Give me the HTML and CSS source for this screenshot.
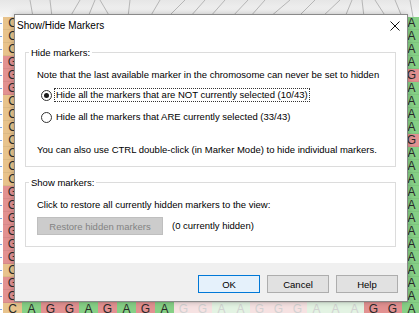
FILE: index.html
```html
<!DOCTYPE html>
<html lang="en">
<head>
  <meta charset="UTF-8" />
  <meta name="viewport" content="width=device-width, initial-scale=1.0"/>
  <title>Show/Hide Markers</title>
  <link rel="stylesheet" href="styles.css">
</head>
<body>
  <div class="view">
    <div class="map-header">
      <svg width="419" height="17" viewBox="0 0 419 17">
        <g stroke="#a8a8a8" stroke-width="0.8" fill="none">
          <line x1="30" y1="0" x2="33" y2="17"/>
          <line x1="50" y1="0" x2="52" y2="17"/>
          <line x1="80" y1="0" x2="70" y2="17"/>
          <line x1="95" y1="0" x2="88" y2="17"/>
          <line x1="100" y1="0" x2="110" y2="17"/>
          <line x1="130" y1="0" x2="128" y2="17"/>
          <line x1="160" y1="0" x2="150" y2="17"/>
          <line x1="185" y1="0" x2="168" y2="17"/>
          <line x1="205" y1="0" x2="190" y2="17"/>
          <line x1="225" y1="0" x2="210" y2="17"/>
          <line x1="248" y1="0" x2="232" y2="17"/>
          <line x1="265" y1="0" x2="250" y2="17"/>
          <line x1="290" y1="0" x2="270" y2="17"/>
          <line x1="315" y1="0" x2="298" y2="17"/>
          <line x1="340" y1="0" x2="322" y2="17"/>
          <line x1="352" y1="0" x2="345" y2="17"/>
          <line x1="362" y1="0" x2="364" y2="17"/>
          <line x1="375" y1="0" x2="386" y2="17"/>
          <line x1="395" y1="0" x2="402" y2="17"/>
          <line x1="410" y1="0" x2="413" y2="17"/>
        </g>
      </svg>
    </div>
    <div class="grid" id="grid"></div>
  </div>

  <div class="dialog">
    <div class="title-bar">
      <span class="title">Show/Hide Markers</span>
      <svg class="close" width="10" height="10" viewBox="0 0 10 10">
        <path d="M0.5 0.5 L9.5 9.5 M9.5 0.5 L0.5 9.5" stroke="#111" stroke-width="1"/>
      </svg>
    </div>

    <div class="dialog-body">
      <fieldset class="group hide-group">
        <legend>Hide markers:</legend>
        <p class="note">Note that the last available marker in the chromosome can never be set to hidden</p>
        <div class="radio first checked"><span class="circle"></span><span class="radio-label focused">Hide all the markers that are NOT currently selected (10/43)</span></div>
        <div class="radio second"><span class="circle"></span><span class="radio-label">Hide all the markers that ARE currently selected (33/43)</span></div>
        <p class="hint">You can also use CTRL double-click (in Marker Mode) to hide individual markers.</p>
      </fieldset>

      <fieldset class="group show-group">
        <legend>Show markers:</legend>
        <p class="note">Click to restore all currently hidden markers to the view:</p>
        <div class="restore-row">
          <button class="restore" disabled>Restore hidden markers</button>
          <span class="hidden-count">(0 currently hidden)</span>
        </div>
      </fieldset>
    </div>

    <div class="dialog-footer">
      <button class="btn default">OK</button>
      <button class="btn">Cancel</button>
      <button class="btn">Help</button>
    </div>
  </div>

  <script>
    // marker grid behind the dialog; only the edge cells show their letters
    const left = "CCCGGGCCCCCCCGGGGGGCGGC";
    const right = "AAAAGAAAAGAAAAAAAAAAAAA";
    const bottom = "CAGGAGAGAGGAAGGGAAAGGA";
    const grid = document.getElementById("grid");
    const lastRow = left.length - 1;
    const lastCol = bottom.length - 1;

    for (let r = 0; r <= lastRow; r++) {
      const ruler = document.createElement("div");
      ruler.className = "ruler";
      grid.appendChild(ruler);

      for (let c = 0; c <= lastCol; c++) {
        let letter = bottom[c];
        if (c === 0) letter = left[r];
        if (c === lastCol) letter = right[r];

        const cell = document.createElement("div");
        cell.className = "cell " + letter;
        if (c >= 9 && c <= 18) cell.className += " faded";
        if (c === 0 || c === lastCol || r === lastRow) cell.textContent = letter;
        grid.appendChild(cell);
      }
    }
  </script>
</body>
</html>
```

FILE: styles.css
```css
body {
  margin: 0;
  width: 419px;
  height: 313px;
  overflow: hidden;
  position: relative;
  background: #ffffff;
  font-family: "Liberation Sans", Arial, sans-serif;
  color: #000;
}

/* background map */
.view {
  width: 419px;
  height: 313px;
  overflow: hidden;
}
.map-header {
  height: 17px;
  background: linear-gradient(#e6e6e6, #f7f7f7);
}
.map-header svg {
  display: block;
}
.grid {
  display: grid;
  grid-template-columns: 3px repeat(22, 19px);
  grid-auto-rows: 13px;
}
.ruler {
  background: linear-gradient(#86a8e0, #86a8e0) no-repeat 0 6px / 2px 1px, #ffffff;
}
.cell {
  font-size: 12px;
  line-height: 13px;
  text-align: center;
  color: #2a2a2a;
  box-shadow: inset 0 -1px 0 rgba(0,0,0,0.05);
}
.cell.A {
  background: #86d086;
}
.cell.G {
  background: #e29191;
}
.cell.C {
  background: #e8c38c;
}
.cell.faded {
  color: #d2d2d2;
}
.cell.faded.A {
  background: #e3f3e3;
}
.cell.faded.G {
  background: #f6e2e2;
}

/* dialog */
.dialog {
  position: absolute;
  left: 14px;
  top: 14px;
  width: 394px;
  height: 288px;
  box-sizing: border-box;
  border: 1px solid #8a8a8a;
  background: #ffffff;
  box-shadow: 0 0 6px rgba(0,0,0,0.25);
  display: flex;
  flex-direction: column;
}
.title-bar {
  height: 27px;
  box-sizing: border-box;
  padding: 5px 7px 0 2px;
  display: flex;
  align-items: flex-start;
}
.title {
  font-size: 10px;
  line-height: 12px;
}
.close {
  margin-left: auto;
  margin-top: 1px;
}
.dialog-body {
  flex: 1;
  padding: 4px 11px 0 10px;
  font-size: 9.5px;
  line-height: 14px;
}
.group {
  margin: 0;
  border: 1px solid #dcdcdc;
  padding: 0 10px 0 11px;
}
.group legend {
  font-size: 9.5px;
  line-height: 13px;
  padding: 0 2px;
  margin-left: -8px;
}
.group p {
  margin: 0;
}
.hide-group {
  padding-bottom: 9px;
}
.hide-group .note {
  margin-top: 9px;
}
.radio {
  display: flex;
  align-items: center;
  padding-left: 4px;
  height: 14px;
}
.radio.first {
  margin-top: 6px;
}
.radio.second {
  margin-top: 8px;
}
.circle {
  width: 11px;
  height: 11px;
  box-sizing: border-box;
  border: 1px solid #333;
  border-radius: 50%;
  background: #fff;
  margin-right: 2px;
  display: flex;
  align-items: center;
  justify-content: center;
}
.radio.checked .circle::after {
  content: "";
  width: 5px;
  height: 5px;
  border-radius: 50%;
  background: #1a1a1a;
}
.radio-label {
  line-height: 12px;
  padding: 0 1px;
  border: 1px solid transparent;
}
.radio-label.focused {
  border: 1px dotted #333;
}
.hint {
  margin-top: 19px !important;
}

.show-group {
  margin-top: 9px;
  padding-bottom: 11px;
}
.show-group .note {
  margin-top: 9px;
}
.restore-row {
  margin-top: 5px;
  display: flex;
  align-items: center;
}
.restore {
  width: 126px;
  height: 18px;
  box-sizing: border-box;
  border: 1px solid #bfbfbf;
  background: #cccccc;
  color: #838383;
  font-family: inherit;
  font-size: 9.5px;
  padding: 0;
}
.hidden-count {
  margin-left: 9px;
}

.dialog-footer {
  height: 38px;
  box-sizing: border-box;
  background: #f0f0f0;
  padding: 12px 9px 0 0;
  display: flex;
  justify-content: flex-end;
  align-items: flex-start;
  gap: 7px;
}
.btn {
  width: 62px;
  height: 18px;
  box-sizing: border-box;
  border: 1px solid #adadad;
  background: #e1e1e1;
  color: #000;
  font-family: inherit;
  font-size: 9.5px;
  padding: 0;
}
.btn.default {
  border-color: #0078d7;
  background: #e5f1fb;
}
```
